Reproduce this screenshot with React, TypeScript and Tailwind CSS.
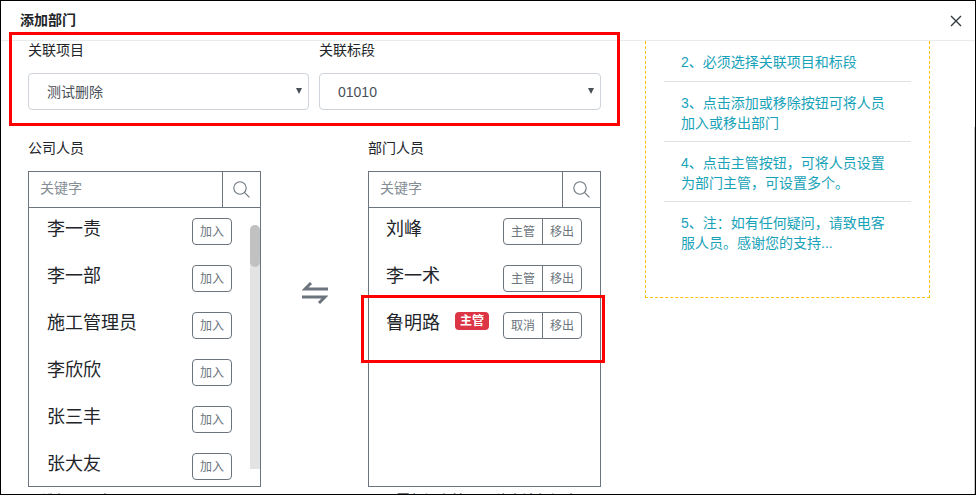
const fontStack = "font-['Liberation_Sans','Noto_Sans_CJK_SC',sans-serif]";

const companyPeople = ["李一责", "李一部", "施工管理员", "李欣欣", "张三丰", "张大友"];

const deptPeople = [
  { name: "刘峰", lead: false },
  { name: "李一术", lead: false },
  { name: "鲁明路", lead: true },
];

const tips = [
  ["2、必须选择关联项目和标段"],
  ["3、点击添加或移除按钮可将人员", "加入或移出部门"],
  ["4、点击主管按钮，可将人员设置", "为部门主管，可设置多个。"],
  ["5、注：如有任何疑问，请致电客", "服人员。感谢您的支持..."],
];

function SelectBox({ label, value, className }: { label: string; value: string; className: string }) {
  return (
    <div className={className}>
      <div className="h-[32px] text-[14px] leading-[18px] text-[#212529]">{label}</div>
      <div className="flex h-[37px] items-center justify-between rounded border border-[#ced4da] pl-[18px] pr-[6px] pt-[1px] text-[14px] text-[#495057]">
        <span>{value}</span>
        <svg className="-mt-[3px]" width="6" height="6" viewBox="0 0 6 6" fill="#495057">
          <path d="M0 0h6L3 6z" />
        </svg>
      </div>
    </div>
  );
}

function SearchBox() {
  return (
    <div className="flex h-[37px] border border-[#6c757d]">
      <div className="flex-1 pl-[11px] text-[14px] leading-[33px] text-[#868e96]">关键字</div>
      <div className="flex w-[38px] items-center justify-center border-l border-[#6c757d]">
        <svg width="17" height="17" viewBox="0 0 17 17" fill="none" stroke="#6c757d" strokeWidth="1.1">
          <circle cx="7" cy="7" r="6.2" />
          <path d="M11.4 11.4l5 5" />
        </svg>
      </div>
    </div>
  );
}

function Btn({ text, className }: { text: string; className: string }) {
  return (
    <span className={`flex h-[27px] items-center justify-center border border-[#6c757d] text-[12px] text-[#6c757d] ${className}`}>
      {text}
    </span>
  );
}

function App() {
  return (
    <div className={`relative h-[495px] w-[976px] overflow-hidden border border-black bg-white ${fontStack}`}>
      <header className="flex h-[40px] items-center justify-between border-b border-[#e9ecef] pl-[19px] pr-[13px]">
        <h1 className="-mt-[1px] text-[14px] font-bold text-[#212529]">添加部门</h1>
        <svg width="12" height="12" viewBox="0 0 12 12" stroke="#343a40" strokeWidth="1.4">
          <path d="M1 1l10 10M11 1L1 11" />
        </svg>
      </header>

      <div className="flex pl-[27px]">
        <div className="w-[573px]">
          <div className="flex gap-[10px]">
            <SelectBox label="关联项目" value="测试删除" className="w-[281px]" />
            <SelectBox label="关联标段" value="01010" className="w-[282px]" />
          </div>

          <div className="mt-[29px] flex">
            <section className="w-[233px]">
              <div className="h-[32px] text-[14px] leading-[18px] text-[#212529]">公司人员</div>
              <SearchBox />
              <div className="relative -mt-px h-[280px] overflow-hidden border border-[#6c757d] pl-[18px] pt-[10px]">
                {companyPeople.map((name) => (
                  <div key={name} className="mb-[20px] flex h-[27px] items-center justify-between pr-[28px]">
                    <span className="-mt-[4px] text-[18px] text-[#212529]">{name}</span>
                    <Btn text="加入" className="w-[40px] rounded" />
                  </div>
                ))}
                <div className="absolute right-0 top-[17px] h-[244px] w-[10px] rounded-t-[5px] bg-[#e3e3e3]">
                  <div className="h-[42px] rounded-[5px] bg-[#c1c1c1]" />
                </div>
              </div>
              <div className="mt-[4px] text-[14px] leading-[18px] text-[#495057]">已选择公司人员</div>
            </section>

            <div className="flex w-[107px] items-center justify-center pb-[62px]">
              <svg width="26" height="22" viewBox="0 0 26 22" fill="none" stroke="#6c757d" strokeWidth="3">
                <path d="M26 7H3l6-6" />
                <path d="M0 15h23l-6 6" />
              </svg>
            </div>

            <section className="w-[233px]">
              <div className="h-[32px] text-[14px] leading-[18px] text-[#212529]">部门人员</div>
              <SearchBox />
              <div className="-mt-px h-[280px] overflow-hidden border border-[#6c757d] pl-[17px] pt-[10px]">
                {deptPeople.map((p) => (
                  <div key={p.name} className="mb-[20px] flex h-[27px] items-center pr-[18px]">
                    <span className="-mt-[4px] text-[18px] text-[#212529]">{p.name}</span>
                    {p.lead && (
                      <span className="-mt-[9px] ml-[15px] flex h-[18px] w-[34px] items-center justify-center rounded bg-[#dc3545] text-[12px] font-bold text-white">
                        主管
                      </span>
                    )}
                    <div className="ml-auto flex">
                      <Btn text={p.lead ? "取消" : "主管"} className="w-[40px] rounded-l" />
                      <Btn text="移出" className="-ml-px w-[40px] rounded-r" />
                    </div>
                  </div>
                ))}
              </div>
              <div className="mt-[4px] text-[14px] leading-[18px] text-[#495057]">可设置部门主管，可移出该部门人员</div>
            </section>
          </div>
        </div>

        <aside className="ml-[44px] h-[257px] w-[285px] border border-t-0 border-dashed border-[#ffc107] px-[18px] text-[14px] leading-[20px] text-[#17a2b8]">
          {tips.map((lines, i) => (
            <div
              key={i}
              className={`pl-[17px] pt-[11px] first:pb-[9px] ${i < tips.length - 1 ? "border-b border-[#dee2e6] pb-[8px]" : ""}`}
            >
              {lines.map((line) => (
                <div key={line}>{line}</div>
              ))}
            </div>
          ))}
        </aside>
      </div>

      {/* sliver of the page scrollbar along the right edge */}
      <div className="absolute bottom-0 right-0 top-[126px] w-px bg-[#c8c8c8]" />

      {/* red annotation boxes drawn over the screenshot */}
      <div className="absolute left-[8px] top-[31px] h-[94px] w-[611px] border-[3px] border-[#ff0000]" />
      <div className="absolute left-[360px] top-[294px] h-[68px] w-[244px] border-[3px] border-[#ff0000]" />
    </div>
  );
}

export default App;
